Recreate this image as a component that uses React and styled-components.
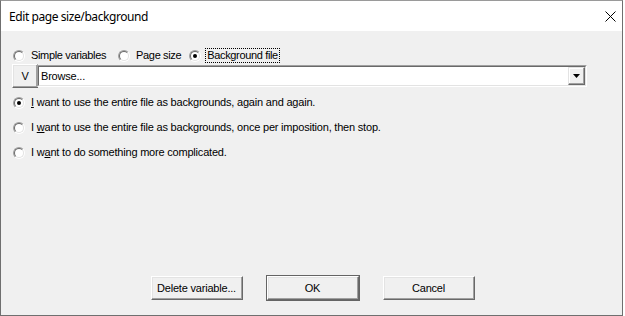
import React from "react";
import styled, { createGlobalStyle } from "styled-components";

const Global = createGlobalStyle`
  html, body { margin: 0; padding: 0; background: #ffffff; }
  body { font-family: "Liberation Sans", Arial, sans-serif; font-size: 11px; letter-spacing: -0.2px; color: #000; }
`;

const Window = styled.div`
  box-sizing: border-box;
  width: 623px;
  height: 316px;
  border: 1px solid #6f6f6f;
  border-top-color: #9a9a9a;
  display: flex;
  flex-direction: column;
  background: #f0f0f0;
`;

const TitleBar = styled.div`
  height: 30px;
  background: #ffffff;
  display: flex;
  align-items: center;
  justify-content: space-between;
  padding: 0 0 0 8px;
  flex-shrink: 0;
`;

const Title = styled.span`
  font-family: "Segoe UI", "Noto Sans", "Open Sans", sans-serif;
  font-size: 12px;
  letter-spacing: -0.42px;
  color: #000;
  padding-top: 1px;
`;

const CloseBox = styled.div`
  width: 24px;
  height: 30px;
  display: flex;
  align-items: center;
  justify-content: center;
`;

const Body = styled.div`
  flex: 1;
  display: flex;
  flex-direction: column;
  padding: 17px 0 0 11px;
`;

const TabRow = styled.div`
  display: flex;
  align-items: center;
  height: 15px;
  letter-spacing: -0.35px;
`;

const RadioLabel = styled.label`
  display: flex;
  align-items: center;
  height: 15px;
  margin-right: ${(p) => p.$gap || 0}px;
  white-space: nowrap;
`;

const RadioCircle = styled.span`
  box-sizing: border-box;
  width: 12px;
  height: 12px;
  border-radius: 50%;
  border: 1px solid;
  border-color: #a0a0a0 #ffffff #ffffff #a0a0a0;
  display: inline-flex;
  margin: 0 4px 0 1px;
  flex-shrink: 0;
  position: relative;
  &::before {
    content: "";
    box-sizing: border-box;
    width: 10px;
    height: 10px;
    border-radius: 50%;
    border: 1px solid;
    border-color: #696969 #e3e3e3 #e3e3e3 #696969;
    background: #ffffff;
  }
  &::after {
    content: "";
    display: ${(p) => (p.$checked ? "block" : "none")};
    position: absolute;
    left: 3px;
    top: 3px;
    width: 4px;
    height: 4px;
    border-radius: 50%;
    background: #000;
  }
`;

const RadioText = styled.span`
  padding: 0 1px;
  line-height: 13px;
  border: 1px dotted ${(p) => (p.$focus ? "#000" : "transparent")};
`;

const U = styled.span`
  text-decoration: underline;
  text-underline-offset: 1px;
`;

const PickRow = styled.div`
  display: flex;
  align-items: flex-start;
  margin-top: 1px;
  height: 25px;
`;

const Btn3D = styled.button`
  box-sizing: border-box;
  font-family: "Liberation Sans", Arial, sans-serif;
  font-size: 11px;
  letter-spacing: -0.2px;
  color: #000;
  background: #f0f0f0;
  width: ${(p) => p.$w}px;
  height: ${(p) => p.$h}px;
  padding: 0;
  margin: 0;
  border: 1px solid;
  border-color: #ffffff #696969 #696969 #ffffff;
  box-shadow: inset -1px -1px 0 #a0a0a0, inset 1px 1px 0 #e3e3e3;
  outline: ${(p) => (p.$default ? "1px solid #646464" : "none")};
  outline-offset: 0;
  display: flex;
  align-items: center;
  justify-content: center;
`;

const Combo = styled.div`
  box-sizing: border-box;
  flex: 1;
  max-width: 550px;
  height: 22px;
  margin-top: 1px;
  margin-left: -1px;
  border: 1px solid;
  border-color: #a0a0a0 #ffffff #ffffff #a0a0a0;
  background: #fff;
  display: flex;
`;

const ComboInner = styled.div`
  box-sizing: border-box;
  flex: 1;
  border: 1px solid;
  border-color: #696969 #e3e3e3 #e3e3e3 #696969;
  display: flex;
  align-items: center;
  padding: 0 0 0 2px;
  justify-content: space-between;
`;

const DropBtn = styled.div`
  box-sizing: border-box;
  width: 17px;
  height: 18px;
  background: #f0f0f0;
  border: 1px solid;
  border-color: #e3e3e3 #696969 #696969 #e3e3e3;
  box-shadow: inset -1px -1px 0 #a0a0a0, inset 1px 1px 0 #ffffff;
  display: flex;
  align-items: center;
  justify-content: center;
`;

const Options = styled.div`
  display: flex;
  flex-direction: column;
  margin-top: 6px;
  gap: 10px;
`;

const Spacer = styled.div`
  flex: 1;
`;

const ButtonBar = styled.div`
  display: flex;
  justify-content: center;
  gap: 24px;
  padding: 0 9px 15px 0;
`;

function Radio({ checked, focus, gap, children }) {
  return (
    <RadioLabel $gap={gap}>
      <RadioCircle $checked={checked} />
      <RadioText $focus={focus}>{children}</RadioText>
    </RadioLabel>
  );
}

export default function App() {
  return (
    <>
      <Global />
      <Window>
        <TitleBar>
          <Title>Edit page size/background</Title>
          <CloseBox>
            <svg width="11" height="11" viewBox="0 0 11 11">
              <path d="M0.5 0.5 L10.5 10.5 M10.5 0.5 L0.5 10.5" stroke="#000" strokeWidth="1" fill="none" />
            </svg>
          </CloseBox>
        </TitleBar>
        <Body>
          <TabRow>
            <Radio gap={9}>Simple variables</Radio>
            <Radio gap={5}>Page size</Radio>
            <Radio checked focus>Background file</Radio>
          </TabRow>
          <PickRow>
            <Btn3D $w={26} $h={24} type="button">V</Btn3D>
            <Combo>
              <ComboInner>
                <span>Browse...</span>
                <DropBtn>
                  <svg width="7" height="4" viewBox="0 0 7 4">
                    <path d="M0 0 H7 L3.5 4 Z" fill="#000" />
                  </svg>
                </DropBtn>
              </ComboInner>
            </Combo>
          </PickRow>
          <Options>
            <Radio checked>
              <U>I</U> want to use the entire file as backgrounds, again and again.
            </Radio>
            <Radio>
              I <U>w</U>ant to use the entire file as backgrounds, once per imposition, then stop.
            </Radio>
            <Radio>
              I w<U>a</U>nt to do something more complicated.
            </Radio>
          </Options>
          <Spacer />
          <ButtonBar>
            <Btn3D $w={92} $h={24} type="button">Delete variable...</Btn3D>
            <Btn3D $w={92} $h={24} $default type="button">OK</Btn3D>
            <Btn3D $w={92} $h={24} type="button">Cancel</Btn3D>
          </ButtonBar>
        </Body>
      </Window>
    </>
  );
}
